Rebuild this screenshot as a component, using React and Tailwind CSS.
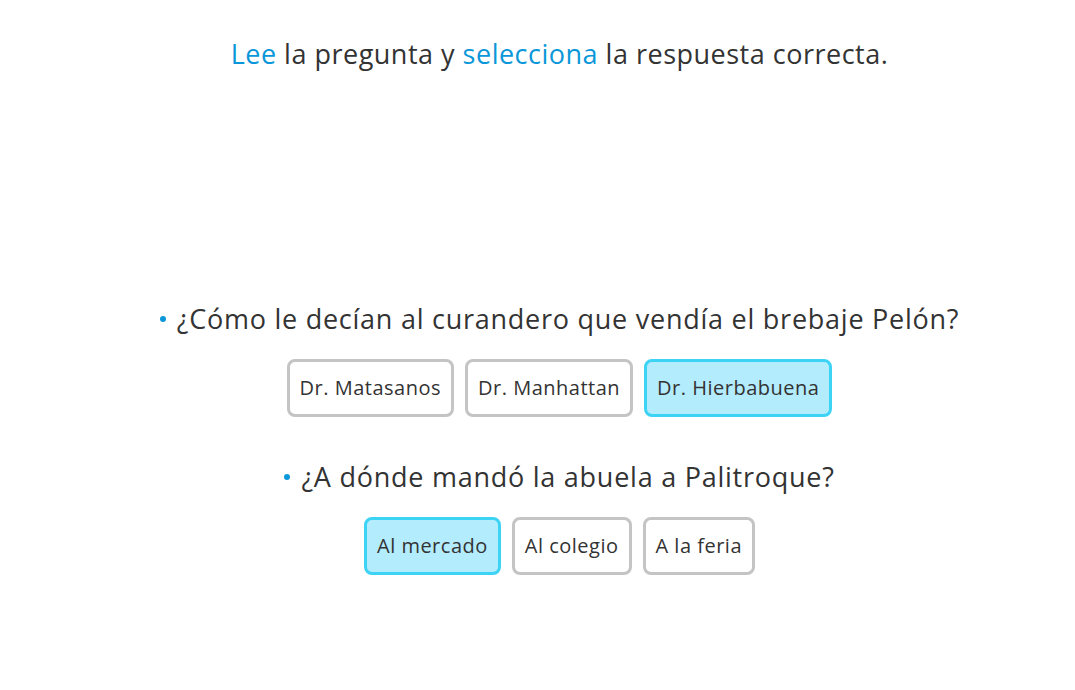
import React, { useState } from 'react';

const QUESTIONS = [
  {
    text: '¿Cómo le decían al curandero que vendía el brebaje Pelón?',
    options: ['Dr. Matasanos', 'Dr. Manhattan', 'Dr. Hierbabuena'],
    selected: 2,
  },
  {
    text: '¿A dónde mandó la abuela a Palitroque?',
    options: ['Al mercado', 'Al colegio', 'A la feria'],
    selected: 0,
  },
];

function Question({ question }) {
  const [selected, setSelected] = useState(question.selected);

  return (
    <div className="flex flex-col items-center">
      <p className="flex items-center text-[27px] leading-[36px] tracking-[0.75px] text-[#333]">
        <span className="mr-[11px] inline-block h-[6px] w-[6px] rounded-full bg-[#0a97d9]" />
        {question.text}
      </p>
      <div className="mt-[22px] flex gap-[11px]">
        {question.options.map((option, i) => (
          <button
            key={option}
            type="button"
            onClick={() => setSelected(i)}
            className={
              i === selected
                ? 'h-[58px] rounded-[8px] border-[3px] border-[#3dd3f5] bg-[#b3ecfd] px-[10px] text-[20px] tracking-[0.5px] text-[#333]'
                : 'h-[58px] rounded-[8px] border-[3px] border-[#c4c4c4] bg-white px-[10px] text-[20px] tracking-[0.5px] text-[#333]'
            }
          >
            {option}
          </button>
        ))}
      </div>
    </div>
  );
}

export default function App() {
  return (
    <div className="min-h-screen bg-white pl-[44px] font-['Open_Sans',sans-serif]">
      <h1 className="pt-[36px] text-center text-[27px] leading-[36px] font-normal tracking-[0.5px] text-[#333]">
        <span className="text-[#0a97d9]">Lee</span> la pregunta y{' '}
        <span className="text-[#0a97d9]">selecciona</span> la respuesta correcta.
      </h1>

      <div className="mt-[229px] flex flex-col items-center gap-[42px]">
        {QUESTIONS.map((q) => (
          <Question key={q.text} question={q} />
        ))}
      </div>
    </div>
  );
}
